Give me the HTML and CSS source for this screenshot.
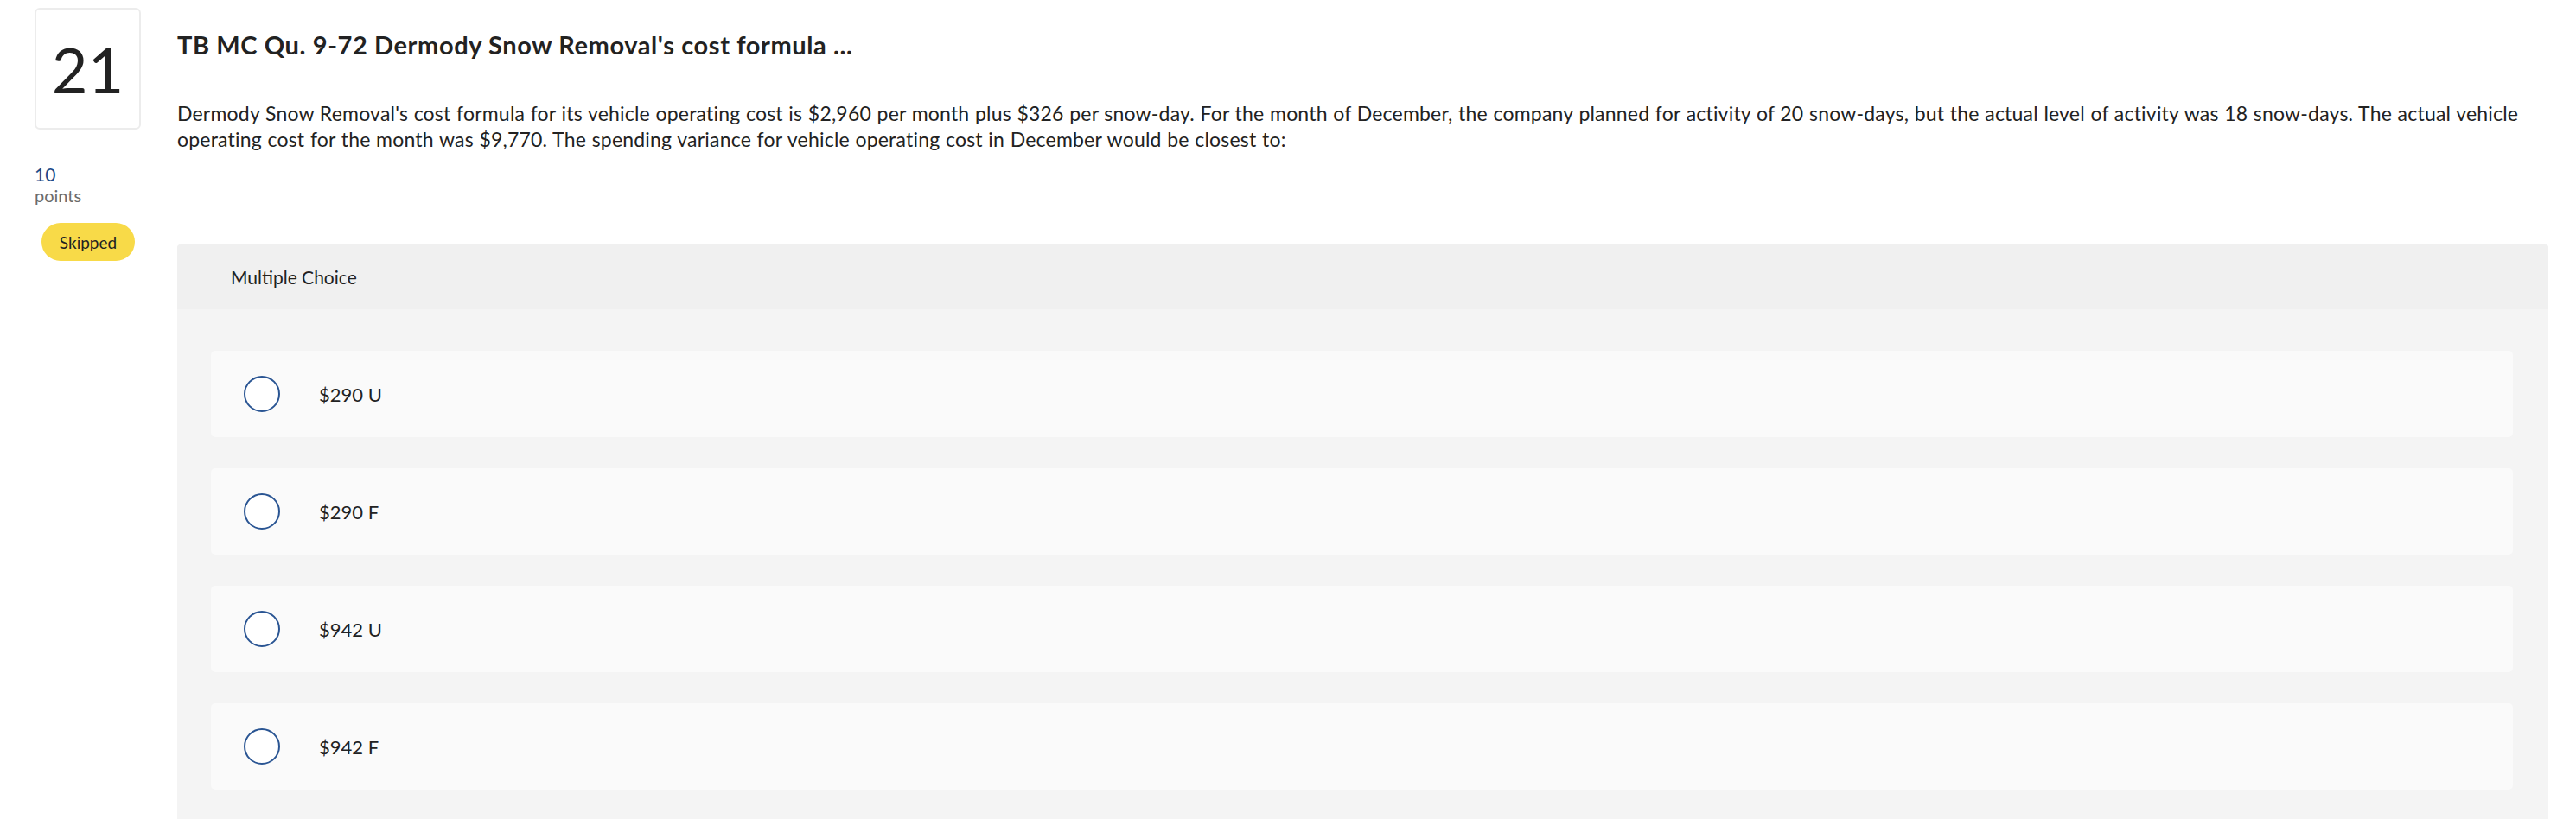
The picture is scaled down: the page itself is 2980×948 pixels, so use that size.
FILE: index.html
```html
<!DOCTYPE html>
<html lang="en">
<head>
<meta charset="utf-8">
<title>Question 21</title>
<link rel="stylesheet" href="styles.css">
</head>
<body>
<div class="page">
  <aside class="side">
    <div class="qnum">21</div>
    <div class="pts">
      <div class="pts-val">10</div>
      <div class="pts-label">points</div>
    </div>
    <div class="status">Skipped</div>
  </aside>
  <main class="main">
    <h1 class="title">TB MC Qu. 9-72 Dermody Snow Removal's cost formula ...</h1>
    <p class="prompt">Dermody Snow Removal's cost formula for its vehicle operating cost is $2,960 per month plus $326 per snow-day. For the month of December, the company planned for activity of 20 snow-days, but the actual level of activity was 18 snow-days. The actual vehicle operating cost for the month was $9,770. The spending variance for vehicle operating cost in December would be closest to:</p>
    <section class="mc">
      <div class="mc-head">Multiple Choice</div>
      <div class="mc-body">
        <div class="opt"><span class="radio"></span><span class="opt-text">$290 U</span></div>
        <div class="opt"><span class="radio"></span><span class="opt-text">$290 F</span></div>
        <div class="opt"><span class="radio"></span><span class="opt-text">$942 U</span></div>
        <div class="opt"><span class="radio"></span><span class="opt-text">$942 F</span></div>
      </div>
    </section>
  </main>
</div>
</body>
</html>
```

FILE: styles.css
```css
html, body {
  margin: 0;
  padding: 0;
  background: #ffffff;
}
body {
  font-family: Lato, "Open Sans", Arial, sans-serif;
  color: #222222;
}
.page {
  display: flex;
  padding: 0 32px 0 40px;
}
.side {
  width: 123px;
  flex: none;
  margin-right: 42px;
  padding-top: 9px;
}
.qnum {
  box-sizing: border-box;
  width: 123px;
  height: 141px;
  border: 2px solid #ececec;
  border-radius: 6px;
  display: flex;
  align-items: center;
  justify-content: center;
  font-size: 72px;
  color: #222222;
}
.pts {
  margin-top: 40px;
}
.pts-val {
  font-size: 21px;
  line-height: 24px;
  color: #1b4a8a;
}
.pts-label {
  font-size: 20px;
  line-height: 24px;
  color: #6b6b6b;
}
.status {
  margin: 20px 0 0 8px;
  width: 108px;
  height: 44px;
  border-radius: 22px;
  background: #f8da48;
  display: flex;
  align-items: center;
  justify-content: center;
  font-size: 19px;
  color: #222222;
}
.main {
  flex: 1;
  min-width: 0;
  padding-top: 35px;
}
.title {
  margin: 0;
  font-size: 29px;
  line-height: 34px;
  font-weight: 700;
  letter-spacing: 0.6px;
  color: #222222;
}
.prompt {
  margin: 47px 0 0 0;
  font-size: 23px;
  line-height: 30px;
  letter-spacing: 0.2px;
  word-spacing: 0.5px;
  color: #222222;
}
.mc {
  margin-top: 107px;
  background: #f4f4f4;
  border-radius: 4px 4px 0 0;
}
.mc-head {
  height: 75px;
  display: flex;
  align-items: center;
  padding-left: 62px;
  background: #f0f0f0;
  font-size: 21px;
  border-radius: 4px 4px 0 0;
}
.mc-body {
  display: flex;
  flex-direction: column;
  gap: 36px;
  padding: 48px 41px 48px 39px;
}
.opt {
  height: 100px;
  background: #fafafa;
  border-radius: 5px;
  display: flex;
  align-items: center;
  padding-left: 38px;
}
.radio {
  box-sizing: border-box;
  width: 42px;
  height: 42px;
  border: 2px solid #2a5593;
  border-radius: 50%;
  background: #ffffff;
  flex: none;
}
.opt-text {
  margin-left: 45px;
  font-size: 22px;
  color: #222222;
}
```
